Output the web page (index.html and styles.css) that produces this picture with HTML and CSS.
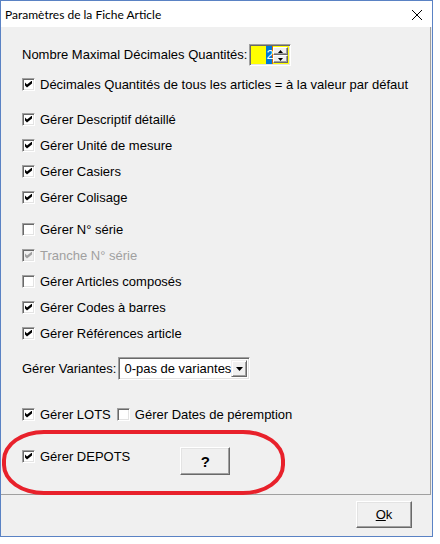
FILE: index.html
```html
<!DOCTYPE html>
<html lang="fr">
<head>
<meta charset="utf-8">
<title>Paramètres de la Fiche Article</title>
<link rel="stylesheet" href="styles.css">
</head>
<body>
<div class="window">
  <div class="titlebar">
    <span class="title">Paramètres de la Fiche Article</span>
    <svg class="close" width="10" height="10" viewBox="0 0 10 10"><path d="M0 0L10 10M10 0L0 10" stroke="#000" stroke-width="1"/></svg>
  </div>
  <div class="panel">
    <div class="row r-spin">
      <span class="lbl">Nombre Maximal Décimales Quantités:</span>
      <div class="spin">
        <div class="spin-field"><span class="sel">2</span></div>
        <div class="spin-btns">
          <div class="sbtn"><svg width="5" height="3" viewBox="0 0 5 3"><path d="M2.5 0L5 3H0z" fill="#000"/></svg></div>
          <div class="sbtn"><svg width="5" height="3" viewBox="0 0 5 3"><path d="M0 0H5L2.5 3z" fill="#000"/></svg></div>
        </div>
      </div>
    </div>
    <label class="row r-def"><span class="cb on"></span>Décimales Quantités de tous les articles = à la valeur par défaut</label>

    <div class="group g1">
      <label class="row"><span class="cb on"></span>Gérer Descriptif détaillé</label>
      <label class="row"><span class="cb on"></span>Gérer Unité de mesure</label>
      <label class="row"><span class="cb on"></span>Gérer Casiers</label>
      <label class="row"><span class="cb on"></span>Gérer Colisage</label>
    </div>

    <div class="group g2">
      <label class="row"><span class="cb"></span>Gérer N° série</label>
      <label class="row disabled"><span class="cb on"></span>Tranche N° série</label>
      <label class="row"><span class="cb"></span>Gérer Articles composés</label>
      <label class="row"><span class="cb on"></span>Gérer Codes à barres</label>
      <label class="row"><span class="cb on"></span>Gérer Références article</label>
    </div>

    <div class="row r-var">
      <span class="lbl">Gérer Variantes:</span>
      <div class="combo">
        <span class="combo-text">0-pas de variantes</span>
        <div class="combo-btn"><svg width="7" height="4" viewBox="0 0 7 4"><path d="M0 0H7L3.5 4z" fill="#000"/></svg></div>
      </div>
    </div>

    <div class="row r-lots">
      <label class="pair"><span class="cb on"></span>Gérer LOTS</label>
      <label class="pair"><span class="cb"></span>Gérer Dates de péremption</label>
    </div>

    <div class="row r-depots">
      <label class="pair"><span class="cb on"></span>Gérer DEPOTS</label>
      <button class="btn help">?</button>
    </div>
  </div>
  <div class="footer">
    <button class="btn ok"><u>O</u>k</button>
  </div>
  <div class="annot"></div>
</div>
</body>
</html>
```

FILE: styles.css
```css
html, body {
  margin: 0;
  padding: 0;
  background: #ffffff;
}

.window {
  position: relative;
  width: 433px;
  height: 537px;
  box-sizing: border-box;
  border: 1px solid #5a82c4;
  background: #f0f0f0;
  display: flex;
  flex-direction: column;
  font-family: "Liberation Sans", Arial, sans-serif;
  font-size: 13px;
  color: #000;
}

.titlebar {
  height: 26px;
  background: #fff;
  display: flex;
  align-items: center;
  justify-content: space-between;
  padding: 0 10px 0 4px;
  flex: none;
}

.title {
  font-family: "Lato", "Noto Sans", sans-serif;
  font-size: 12px;
  padding-top: 1px;
}

.close {
  display: block;
  margin-top: 1px;
}

.panel {
  height: 468px;
  box-sizing: border-box;
  width: 430px;
  border-right: 1px solid #a0a0a0;
  border-bottom: 1px solid #a0a0a0;
  padding: 14px 0 0 21px;
  flex: none;
}

.row {
  display: flex;
  align-items: center;
  height: 26px;
}

.cb {
  width: 13px;
  height: 13px;
  box-sizing: border-box;
  flex: none;
  background: #fff;
  border: 1px solid;
  border-color: #a0a0a0 #fff #fff #a0a0a0;
  box-shadow: inset 1px 1px 0 #696969, inset -1px -1px 0 #e3e3e3;
  margin-right: 5px;
  position: relative;
}

.cb.on::after {
  content: "";
  position: absolute;
  left: 2px;
  top: 2px;
  width: 7px;
  height: 7px;
  background: #000;
  clip-path: polygon(0 28.57%, 28.57% 57.14%, 100% 0, 100% 42.86%, 28.57% 100%, 0 71.43%);
}

.disabled {
  color: #a0a0a0;
}

.disabled .cb {
  background: #f0f0f0;
}

.disabled .cb.on::after {
  background: #a0a0a0;
}

.r-def {
  margin-top: 4px;
}

.g1 {
  margin-top: 9px;
}

.g2 {
  margin-top: 6px;
}

.lbl {
  white-space: nowrap;
}

.r-spin .lbl {
  margin-right: 2px;
}

.spin {
  display: flex;
  height: 22px;
  box-sizing: border-box;
  border: 1px solid;
  border-color: #a0a0a0 #fff #fff #a0a0a0;
  box-shadow: inset 1px 1px 0 #696969, inset -1px -1px 0 #e3e3e3;
  padding: 2px 2px 2px 2px;
  background: #ffff00;
  margin-top: 2px;
}

.spin-field {
  width: 21px;
  display: flex;
  align-items: center;
  justify-content: flex-end;
  background: #ffff00;
}

.sel {
  background: #0078d7;
  color: #fff;
  height: 18px;
  line-height: 18px;
  width: 6px;
  text-align: center;
  border-right: 1px solid #e06a00;
}

.spin-btns {
  display: flex;
  flex-direction: column;
  width: 15px;
  gap: 0;
}

.sbtn {
  flex: 1;
  background: #f0f0f0;
  border: 1px solid;
  border-color: #fff #696969 #696969 #fff;
  box-shadow: inset -1px -1px 0 #a0a0a0;
  display: flex;
  align-items: center;
  justify-content: center;
}

.sbtn svg {
  display: block;
}

.r-var {
  margin-top: 9px;
}

.r-var .lbl {
  margin-right: 2px;
}

.combo {
  width: 132px;
  height: 23px;
  box-sizing: border-box;
  border: 1px solid;
  border-color: #a0a0a0 #fff #fff #a0a0a0;
  box-shadow: inset 1px 1px 0 #696969, inset -1px -1px 0 #e3e3e3;
  background: #fff;
  padding: 2px;
  display: flex;
  align-items: center;
  justify-content: space-between;
  margin-top: 1px;
}

.combo-text {
  padding-left: 3px;
}

.combo-btn {
  width: 16px;
  height: 17px;
  box-sizing: border-box;
  background: #f0f0f0;
  border: 1px solid;
  border-color: #f0f0f0 #696969 #696969 #f0f0f0;
  box-shadow: inset 1px 1px 0 #fff, inset -1px -1px 0 #a0a0a0;
  display: flex;
  align-items: center;
  justify-content: center;
}

.combo-btn svg {
  display: block;
}

.r-lots {
  margin-top: 20px;
}

.pair {
  display: flex;
  align-items: center;
  margin-right: 6px;
}

.r-depots {
  margin-top: 16px;
  align-items: flex-start;
}

.r-depots .pair {
  height: 26px;
}

.btn {
  font-family: "Liberation Sans", Arial, sans-serif;
  font-size: 13px;
  color: #000;
  background: #f0f0f0;
  border: 1px solid;
  border-color: #fff #696969 #696969 #fff;
  box-shadow: inset -1px -1px 0 #a0a0a0, inset 1px 1px 0 #e3e3e3;
  padding: 0;
  box-sizing: border-box;
}

.help {
  width: 50px;
  height: 28px;
  margin-top: 4px;
  margin-left: 44px;
  font-weight: bold;
  font-size: 15px;
}

.footer {
  flex: none;
  height: 39px;
  display: flex;
  justify-content: flex-end;
  align-items: flex-start;
  padding: 6px 20px 0 0;
  box-sizing: border-box;
}

.ok {
  width: 56px;
  height: 27px;
}

.ok u {
  text-decoration: underline;
}

.annot {
  position: absolute;
  left: 1px;
  top: 429px;
  width: 283px;
  height: 65px;
  box-sizing: border-box;
  border: 4px solid #e8212b;
  border-radius: 42px / 30px;
  pointer-events: none;
}
```
